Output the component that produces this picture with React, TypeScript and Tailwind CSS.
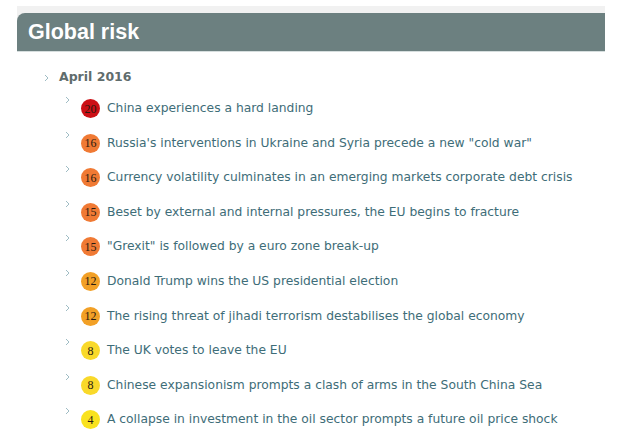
import React from "react";

const items: { n: number; text: string; color: string }[] = [
  { n: 20, text: "China experiences a hard landing", color: "#cc1016" },
  { n: 16, text: "Russia's interventions in Ukraine and Syria precede a new \"cold war\"", color: "#f07a34" },
  { n: 16, text: "Currency volatility culminates in an emerging markets corporate debt crisis", color: "#f07a34" },
  { n: 15, text: "Beset by external and internal pressures, the EU begins to fracture", color: "#f07a34" },
  { n: 15, text: "\"Grexit\" is followed by a euro zone break-up", color: "#f07a34" },
  { n: 12, text: "Donald Trump wins the US presidential election", color: "#f2a026" },
  { n: 12, text: "The rising threat of jihadi terrorism destabilises the global economy", color: "#f2a026" },
  { n: 8, text: "The UK votes to leave the EU", color: "#f9d92a" },
  { n: 8, text: "Chinese expansionism prompts a clash of arms in the South China Sea", color: "#f9d92a" },
  { n: 4, text: "A collapse in investment in the oil sector prompts a future oil price shock", color: "#f9e21e" },
];

function Chevron() {
  return (
    <svg width="5" height="8" viewBox="0 0 5 8" className="shrink-0">
      <path d="M1 1 L4 4 L1 7" fill="none" stroke="#9fbcc4" strokeWidth="1" />
    </svg>
  );
}

export default function App() {
  return (
    <div className="w-[624px] h-[447px] bg-white overflow-hidden pt-[6px]">
      <div className="ml-[17px] w-[588px] bg-[#f1f1f1] pt-[7px]">
        <div className="h-[39px] bg-[#6c8080] rounded-tl-[8px] border-b border-[#d6dede] flex items-center pl-[11px] pt-[2px]">
          <span className="text-white font-bold text-[21.5px] leading-none" style={{ fontFamily: '"Liberation Sans", Arial, sans-serif' }}>
            Global risk
          </span>
        </div>
      </div>
      <div className="ml-[17px] w-[588px] bg-white" style={{ fontFamily: '"DejaVu Sans", Verdana, sans-serif' }}>
        <div className="flex items-center pl-[27px] pt-[14px] h-[37px] gap-[10px]">
          <Chevron />
          <span className="text-[#5f6c6c] font-bold text-[12.5px]">April 2016</span>
        </div>
        <div className="flex flex-col pl-[48px] pt-[5px]">
          {items.map((it, i) => (
            <div key={i} className="flex items-start h-[34.6px]">
              <div className="pt-[2px] w-[16px]">
                <Chevron />
              </div>
              <div
                className="w-[19px] h-[19px] rounded-full flex items-center justify-center shrink-0 mt-[5px]"
                style={{ backgroundColor: it.color }}
              >
                <span className="text-[12px] text-[#2a1a10] leading-none" style={{ fontFamily: '"Liberation Serif", "Times New Roman", serif' }}>
                  {it.n}
                </span>
              </div>
              <span className="ml-[7px] mt-[5px] text-[12.3px] leading-[19px] text-[#3e6d78] whitespace-nowrap">{it.text}</span>
            </div>
          ))}
        </div>
      </div>
    </div>
  );
}
